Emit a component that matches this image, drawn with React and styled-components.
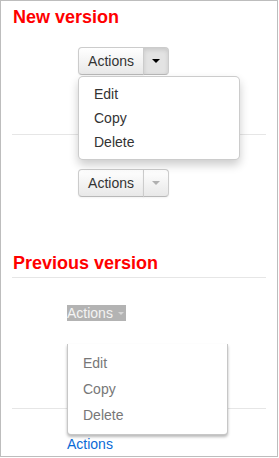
import React from 'react'
import styled, { createGlobalStyle } from 'styled-components'

const GlobalStyle = createGlobalStyle`
  html, body {
    margin: 0;
    padding: 0;
    background: #fff;
  }
  body {
    font-family: "Liberation Sans", Arial, sans-serif;
    font-size: 14px;
    color: #333;
  }
`

const Frame = styled.div`
  box-sizing: border-box;
  width: 278px;
  height: 457px;
  border: 1px solid #bdbdbd;
  padding: 6px 12px 0 11px;
  display: flex;
  flex-direction: column;
`

const Title = styled.h2`
  margin: ${p => p.$top || 0}px 0 0 1px;
  font-size: 18px;
  line-height: 20px;
  font-weight: bold;
  color: #ff0000;
`

const Divider = styled.hr`
  margin: ${p => p.$top || 0}px 0 0 0;
  border: 0;
  border-top: 1px solid #e6e6e6;
  height: 0;
  width: 254px;
`

const Row = styled.div`
  margin-top: ${p => p.$top || 0}px;
  padding-left: ${p => p.$indent || 0}px;
  display: flex;
  position: relative;
  z-index: ${p => p.$raise ? 2 : 'auto'};
`

const BtnGroup = styled.div`
  display: inline-flex;
  position: relative;
`

const Btn = styled.button`
  box-sizing: border-box;
  height: 28px;
  margin: 0;
  padding: 0 ${p => p.$caret ? 0 : 10}px;
  width: ${p => p.$caret ? '26px' : '66px'};
  font-family: inherit;
  font-size: 14px;
  line-height: 20px;
  color: #333;
  border: 1px solid #cccccc;
  border-bottom-color: #b8b8b8;
  background: ${p => p.$active
    ? '#e3e3e3'
    : 'linear-gradient(#ffffff, #e8e8e8)'};
  box-shadow: ${p => p.$active
    ? 'inset 0 2px 4px rgba(0,0,0,0.12)'
    : 'inset 0 1px 0 rgba(255,255,255,0.2), 0 1px 2px rgba(0,0,0,0.05)'};
  border-radius: ${p => p.$caret ? '0 4px 4px 0' : '4px 0 0 4px'};
  margin-left: ${p => p.$caret ? '-1px' : '0'};
  display: flex;
  align-items: center;
  justify-content: center;
  cursor: pointer;
`

const Caret = styled.span`
  display: inline-block;
  width: 0;
  height: 0;
  border-top: ${p => p.$size || 4}px solid ${p => p.$color || '#000'};
  border-left: ${p => p.$size || 4}px solid transparent;
  border-right: ${p => p.$size || 4}px solid transparent;
`

const Menu = styled.ul`
  position: absolute;
  top: 100%;
  left: 0;
  margin: 1px 0 0 0;
  padding: 5px 0;
  list-style: none;
  width: 162px;
  box-sizing: border-box;
  background: #fff;
  border: 1px solid rgba(0,0,0,0.2);
  border-radius: 5px;
  box-shadow: 0 5px 10px rgba(0,0,0,0.2);
  z-index: 5;
`

const OldMenu = styled.ul`
  position: absolute;
  top: 100%;
  left: 0;
  margin: 23px 0 0 0;
  padding: 6px 0;
  list-style: none;
  width: 161px;
  box-sizing: border-box;
  background: #fff;
  border: 1px solid rgba(0,0,0,0.22);
  border-top: 0;
  border-radius: 0 0 4px 4px;
  box-shadow: 0 2px 3px rgba(0,0,0,0.28);
  z-index: 5;
`

const Item = styled.li`
  padding: 0 15px;
  line-height: ${p => p.$lh || 24}px;
  font-size: 14px;
  color: ${p => p.$muted ? '#777' : '#333'};
  white-space: nowrap;
`

const OldToggle = styled.span`
  display: inline-flex;
  align-items: center;
  gap: 5px;
  height: 16px;
  line-height: 16px;
  padding-right: 2px;
  background: #b3b3b3;
  color: #f4f4f4;
  font-size: 14px;
`

const Link = styled.a`
  font-size: 14px;
  line-height: 16px;
  color: #0a6ad6;
  text-decoration: none;
`

const Wrap = styled.div`
  position: relative;
`

const NewDropdown = ({ open, active }) => (
  <BtnGroup>
    <Btn>Actions</Btn>
    <Btn $caret $active={active}>
      <Caret $color={open ? '#000' : '#b0b0b0'} />
    </Btn>
    {open && (
      <Menu>
        <Item>Edit</Item>
        <Item>Copy</Item>
        <Item>Delete</Item>
      </Menu>
    )}
  </BtnGroup>
)

export default function App() {
  return (
    <>
      <GlobalStyle />
      <Frame>
        <Title>New version</Title>
        <Row $top={20} $indent={66} $raise>
          <NewDropdown open active />
        </Row>
        <Divider $top={59} />
        <Row $top={34} $indent={66}>
          <NewDropdown />
        </Row>

        <Title $top={56}>Previous version</Title>
        <Divider $top={4} />
        <Row $top={27} $indent={55} $raise>
          <Wrap>
            <OldToggle>
              Actions
              <Caret $size={3} $color="#d6d6d6" />
            </OldToggle>
            <OldMenu>
              <Item $muted $lh={26}>Edit</Item>
              <Item $muted $lh={26}>Copy</Item>
              <Item $muted $lh={26}>Delete</Item>
            </OldMenu>
          </Wrap>
        </Row>
        <Divider $top={87} />
        <Row $top={27} $indent={55}>
          <Link href="#">Actions</Link>
        </Row>
      </Frame>
    </>
  )
}
